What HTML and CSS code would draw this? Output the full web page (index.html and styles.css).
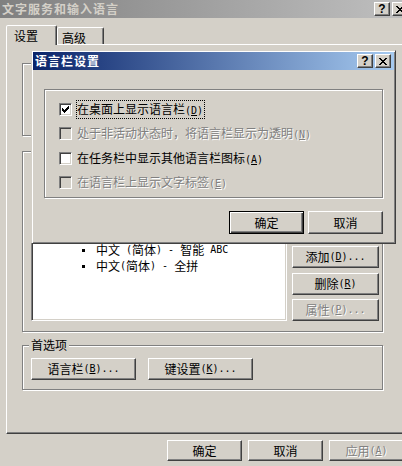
FILE: index.html
```html
<!DOCTYPE html>
<html lang="zh-CN">
<head>
<meta charset="utf-8">
<title>文字服务和输入语言</title>
<link rel="stylesheet" href="styles.css">
</head>
<body>
<div class="win">
  <div class="titlebar inactive">
    <span class="title-text">文字服务和输入语言</span>
    <div class="tbtns">
      <span class="tbtn help">?</span>
      <span class="tbtn"><svg class="xicon" width="8" height="7" viewBox="0 0 8 7"><path d="M0 0h2v1h-2zM6 0h2v1h-2zM1 1h2v1h-2zM5 1h2v1h-2zM2 2h4v1h-4zM3 3h2v1h-2zM2 4h4v1h-4zM1 5h2v1h-2zM5 5h2v1h-2zM0 6h2v1h-2zM6 6h2v1h-2z"/></svg></span>
    </div>
  </div>

  <div class="tabs">
    <div class="tab sel">设置</div>
    <div class="tab">高级</div>
  </div>

  <div class="panel">
    <div class="group g1"></div>
    <div class="group g2">
      <div class="listbox">
        <div class="item"><span class="bullet"></span>中文<span class="a"> (</span>简体<span class="a">) - </span>智能<span class="a"> ABC</span></div>
        <div class="item"><span class="bullet"></span>中文<span class="a">(</span>简体<span class="a">) - </span>全拼</div>
      </div>
      <div class="side-btns">
        <div class="btn side">添加<span class="a">(<u>D</u>)...</span></div>
        <div class="btn side">删除<span class="a">(<u>R</u>)</span></div>
        <div class="btn side dis">属性<span class="a">(<u>P</u>)...</span></div>
      </div>
    </div>
    <div class="group g3">
      <span class="legend">首选项</span>
      <div class="pref-btns">
        <div class="btn pref">语言栏<span class="a">(<u>B</u>)...</span></div>
        <div class="btn pref">键设置<span class="a">(<u>K</u>)...</span></div>
      </div>
    </div>
  </div>

  <div class="foot">
    <div class="btn foot-btn">确定</div>
    <div class="btn foot-btn">取消</div>
    <div class="btn foot-btn dis">应用<span class="a">(<u>A</u>)</span></div>
  </div>

  <div class="dlg">
    <div class="titlebar active">
      <span class="title-text">语言栏设置</span>
      <div class="tbtns">
        <span class="tbtn help">?</span>
        <span class="tbtn"><svg class="xicon" width="8" height="7" viewBox="0 0 8 7"><path d="M0 0h2v1h-2zM6 0h2v1h-2zM1 1h2v1h-2zM5 1h2v1h-2zM2 2h4v1h-4zM3 3h2v1h-2zM2 4h4v1h-4zM1 5h2v1h-2zM5 5h2v1h-2zM0 6h2v1h-2zM6 6h2v1h-2z"/></svg></span>
      </div>
    </div>
    <div class="dlg-body">
      <div class="group dgroup">
        <div class="row">
          <span class="cb"><svg width="7" height="7" viewBox="0 0 7 7"><path d="M6 0h1v1h-1zM5 1h2v1h-2zM0 2h1v1h-1zM4 2h3v1h-3zM0 3h2v1h-2zM3 3h3v1h-3zM0 4h5v1h-5zM1 5h3v1h-3zM2 6h1v1h-1z"/></svg></span>
          <span class="lbl focus">在桌面上显示语言栏<span class="a">(<u>D</u>)</span></span>
        </div>
        <div class="row">
          <span class="cb dis"></span>
          <span class="lbl dis">处于非活动状态时，将语言栏显示为透明<span class="a">(<u>N</u>)</span></span>
        </div>
        <div class="row">
          <span class="cb"></span>
          <span class="lbl">在任务栏中显示其他语言栏图标<span class="a">(<u>A</u>)</span></span>
        </div>
        <div class="row">
          <span class="cb dis"></span>
          <span class="lbl dis">在语言栏上显示文字标签<span class="a">(<u>E</u>)</span></span>
        </div>
      </div>
      <div class="dlg-btns">
        <div class="btn dbtn default">确定</div>
        <div class="btn dbtn">取消</div>
      </div>
    </div>
  </div>
</div>
</body>
</html>
```

FILE: styles.css
```css
* { box-sizing: border-box; }
html, body { margin: 0; padding: 0; }
body {
  width: 402px;
  height: 466px;
  overflow: hidden;
  background: #D4D0C8;
  font-family: "Noto Sans CJK SC", "Liberation Sans", sans-serif;
  font-size: 12px;
  line-height: 14px;
  color: #000;
}
u { text-decoration: underline; text-underline-offset: 1px; }
.a {
  font-family: "DejaVu Sans Mono", "Liberation Mono", monospace;
  font-size: 10px;
  white-space: pre;
}

.win {
  position: relative;
  width: 410px;
  height: 466px;
}

/* title bars */
.titlebar {
  height: 18px;
  display: flex;
  align-items: center;
  justify-content: space-between;
  padding: 0 2px 0 2px;
}
.titlebar.inactive {
  background: linear-gradient(to right, #808080, #C0C0C0);
  color: #D4D0C8;
}
.titlebar.active {
  background: linear-gradient(to right, #0A246A, #A6CAF0);
  color: #fff;
  padding-right: 3px;
}
.title-text {
  font-weight: bold;
  letter-spacing: 1px;
  line-height: 18px;
}
.tbtns { display: flex; gap: 2px; }
.tbtn {
  width: 16px;
  height: 14px;
  background: #D4D0C8;
  border: 1px solid;
  border-color: #fff #404040 #404040 #fff;
  box-shadow: inset -1px -1px #808080;
  display: flex;
  align-items: center;
  justify-content: center;
  color: #000;
}
.tbtn.help {
  font-family: "Liberation Sans", sans-serif;
  font-weight: bold;
  font-size: 12px;
  line-height: 12px;
  padding-bottom: 1px;
}
.xicon { fill: #000; display: block; margin-left: -1px; }

/* tabs */
.tabs {
  display: flex;
  align-items: flex-end;
  height: 20px;
  margin-top: 7px;
  margin-bottom: -1px;
  padding-left: 6px;
  position: relative;
  z-index: 1;
}
.tab {
  border: 1px solid;
  border-bottom: none;
  border-color: #fff #404040 transparent #fff;
  border-radius: 2px 2px 0 0;
  box-shadow: inset -1px 0 #808080;
  background: #D4D0C8;
}
.tab.sel {
  width: 51px;
  height: 20px;
  padding: 3px 0 0 7px;
}
.tab:not(.sel) {
  width: 47px;
  height: 17px;
  margin-bottom: 1px;
  padding: 3px 0 0 4px;
}

/* panel */
.panel {
  margin-left: 6px;
  width: 398px;
  height: 390px;
  border: 1px solid;
  border-color: #fff #404040 #404040 #fff;
  box-shadow: inset -1px -1px #808080;
  padding: 18px 0 0 15px;
}

.group {
  position: relative;
  border: 1px solid #808080;
  box-shadow: inset 1px 1px #fff, 1px 1px 0 #fff;
}
.g1 { width: 361px; height: 73px; }
.g2 {
  width: 361px;
  height: 181px;
  margin-top: 15px;
  display: flex;
  align-items: flex-end;
  gap: 5px;
  padding: 0 0 10px 8px;
}
.g3 {
  width: 361px;
  height: 45px;
  margin-top: 13px;
  padding: 12px 0 0 8px;
}
.legend {
  position: absolute;
  top: -8px;
  left: 6px;
  padding: 0 2px;
  background: #D4D0C8;
  line-height: 14px;
}

.listbox {
  width: 256px;
  height: 100px;
  background: #fff;
  border: 1px solid;
  border-color: #808080 #fff #fff #808080;
  box-shadow: inset 1px 1px #404040, inset -1px -1px #D4D0C8;
  padding-top: 20px;
}
.item {
  display: flex;
  align-items: center;
  height: 16px;
  padding-left: 50px;
  white-space: pre;
}
.bullet {
  width: 3px;
  height: 3px;
  background: #000;
  margin-right: 11px;
}

.side-btns {
  display: flex;
  flex-direction: column;
  gap: 4.5px;
}

/* buttons */
.btn {
  display: flex;
  align-items: center;
  justify-content: center;
  background: #D4D0C8;
  border: 1px solid;
  border-color: #fff #404040 #404040 #fff;
  box-shadow: inset -1px -1px #808080;
  white-space: nowrap;
}
.btn.side { width: 87px; height: 22px; }
.btn.pref { width: 105px; height: 22px; }
.pref-btns { display: flex; gap: 12px; }
.dis { color: #808080; text-shadow: 1px 1px 0 #fff; }

.foot {
  display: flex;
  justify-content: flex-end;
  gap: 6px;
  margin-top: 6px;
  padding-right: 6px;
}
.foot-btn { width: 75px; height: 21px; }

/* overlay dialog */
.dlg {
  position: absolute;
  left: 31px;
  top: 50px;
  width: 365px;
  height: 194px;
  background: #D4D0C8;
  border: 1px solid;
  border-color: #D4D0C8 #404040 #404040 #D4D0C8;
  box-shadow: inset 1px 1px #fff, inset -1px -1px #808080;
  padding: 1px;
  z-index: 5;
}
.dlg-body { padding: 19px 11px 0 11px; }
.dgroup {
  width: 339px;
  height: 109px;
  padding: 13px 0 0 14px;
  display: flex;
  flex-direction: column;
  gap: 11.33px;
}
.row {
  display: flex;
  align-items: center;
  gap: 5px;
  height: 13px;
  white-space: nowrap;
}
.cb {
  width: 13px;
  height: 13px;
  flex: none;
  background: #fff;
  border: 1px solid;
  border-color: #808080 #fff #fff #808080;
  box-shadow: inset 1px 1px #404040, inset -1px -1px #D4D0C8;
  display: flex;
  align-items: center;
  justify-content: center;
}
.cb svg { display: block; fill: #000; }
.cb.dis { background: #D4D0C8; }
.lbl { line-height: 13px; }
.lbl.focus {
  border: 1px dotted #000;
  padding: 1px 1px 1px 0;
  margin-left: -1px;
}

.dlg-btns {
  display: flex;
  justify-content: flex-end;
  gap: 4px;
  margin-top: 13px;
}
.dbtn { width: 75px; height: 23px; }
.dbtn.default {
  border: 1px solid #000;
  box-shadow: inset 1px 1px #fff, inset -1px -1px #404040, inset -2px -2px #808080;
}
```
